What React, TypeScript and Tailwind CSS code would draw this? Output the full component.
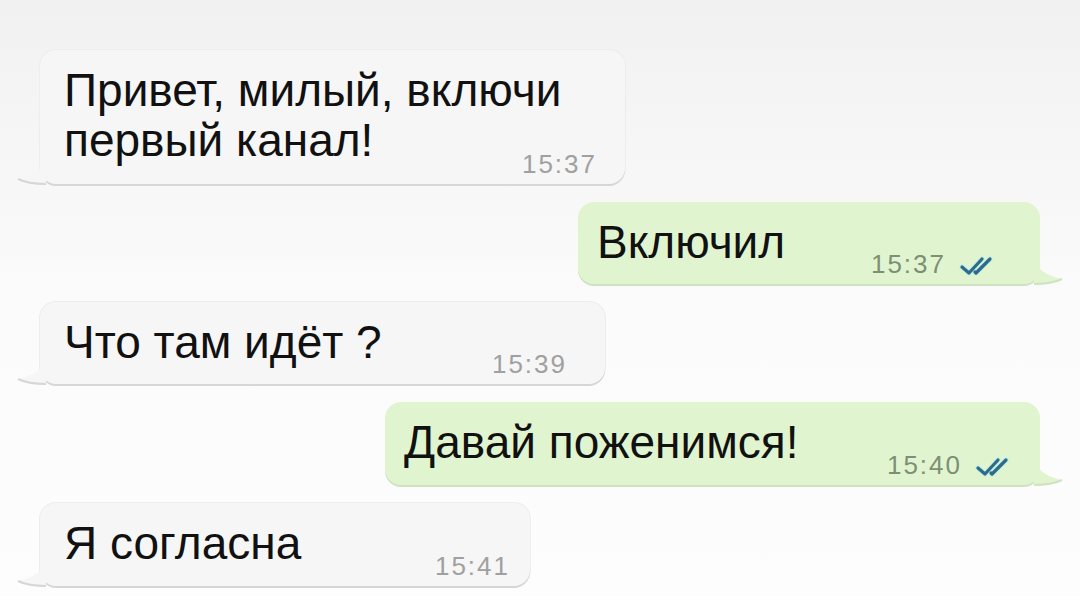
import React from "react";

type Msg = {
  out?: boolean;
  lines: string[];
  time: string;
  w: string;
  h: string;
  pr: string;
};

const messages: Msg[] = [
  { lines: ["Привет, милый, включи", "первый канал!"], time: "15:37", w: "w-[585px]", h: "h-[134px]", pr: "pr-[28px]" },
  { out: true, lines: ["Включил"], time: "15:37", w: "w-[462px]", h: "h-[82px]", pr: "pr-[40px]" },
  { lines: ["Что там идёт ?"], time: "15:39", w: "w-[565px]", h: "h-[82px]", pr: "pr-[38px]" },
  { out: true, lines: ["Давай поженимся!"], time: "15:40", w: "w-[655px]", h: "h-[83px]", pr: "pr-[24px]" },
  { lines: ["Я согласна"], time: "15:41", w: "w-[490px]", h: "h-[83px]", pr: "pr-[20px]" },
];

function Ticks() {
  return (
    <svg width="42" height="22" viewBox="0 0 42 22" className="mb-[1px]">
      <g fill="none" stroke="#a8e6f5" strokeWidth="5" strokeLinecap="round" strokeLinejoin="round" opacity="0.55">
        <path d="M4 12 L11 18 L24 4" />
        <path d="M17 17 L18 18 L32 4" />
      </g>
      <g fill="none" stroke="#2d6b8a" strokeWidth="3.2" strokeLinecap="round" strokeLinejoin="round">
        <path d="M4 12 L11 18 L24 4" />
        <path d="M17 17 L18 18 L32 4" />
      </g>
    </svg>
  );
}

function Tail({ out }: { out?: boolean }) {
  const fill = out ? "#e0f5cf" : "#f6f6f6";
  const edge = out ? "#cfe3c0" : "#d6d6d6";
  return (
    <svg
      width="30"
      height="28"
      viewBox="0 0 30 28"
      className={out ? "absolute -right-[24px] bottom-[-2px] -scale-x-100" : "absolute -left-[24px] bottom-[-2px]"}
    >
      <path d="M30 0 C28 10 18 18 2 21 C10 25 20 26 30 26 Z" fill={fill} />
      <path d="M2 21 C10 25 20 26 30 26" fill="none" stroke={edge} strokeWidth="2" />
    </svg>
  );
}

function Bubble({ m }: { m: Msg }) {
  return (
    <div className={`flex ${m.out ? "justify-end pr-[40px]" : "justify-start pl-[40px]"}`}>
      <div
        className={`relative ${m.w} ${m.h} ${m.pr} rounded-[16px] flex items-end justify-between ${
          m.out
            ? "bg-[#e0f5cf] shadow-[0_2px_0_#cfe3c0] pl-[19px]"
            : "bg-[#f6f6f6] shadow-[0_2px_0_#d6d6d6,0_0_0_1px_#ededed] pl-[24px]"
        }`}
      >
        <Tail out={m.out} />
        <div className="self-start min-w-0 pt-[15px] text-[46px] leading-[50px] text-[#111] whitespace-nowrap">
          {m.lines.map((l) => (
            <div key={l}>{l}</div>
          ))}
        </div>
        <div className="flex shrink-0 items-end gap-[12px] pb-[6px]">
          <span
            className={`text-[26px] leading-[28px] tracking-[2px] ${m.out ? "text-[#7d8f74]" : "text-[#a0a0a0]"}`}
          >
            {m.time}
          </span>
          {m.out && <Ticks />}
        </div>
      </div>
    </div>
  );
}

export default function App() {
  return (
    <div
      className="w-[1080px] h-[596px] overflow-hidden bg-gradient-to-b from-[#f1f1f1] via-[#fbfbfb] to-[#fdfdfd]"
      style={{ fontFamily: '"Liberation Sans", Arial, sans-serif' }}
    >
      <div className="flex flex-col gap-[18px] pt-[50px]">
        {messages.map((m, i) => (
          <Bubble key={i} m={m} />
        ))}
      </div>
    </div>
  );
}
